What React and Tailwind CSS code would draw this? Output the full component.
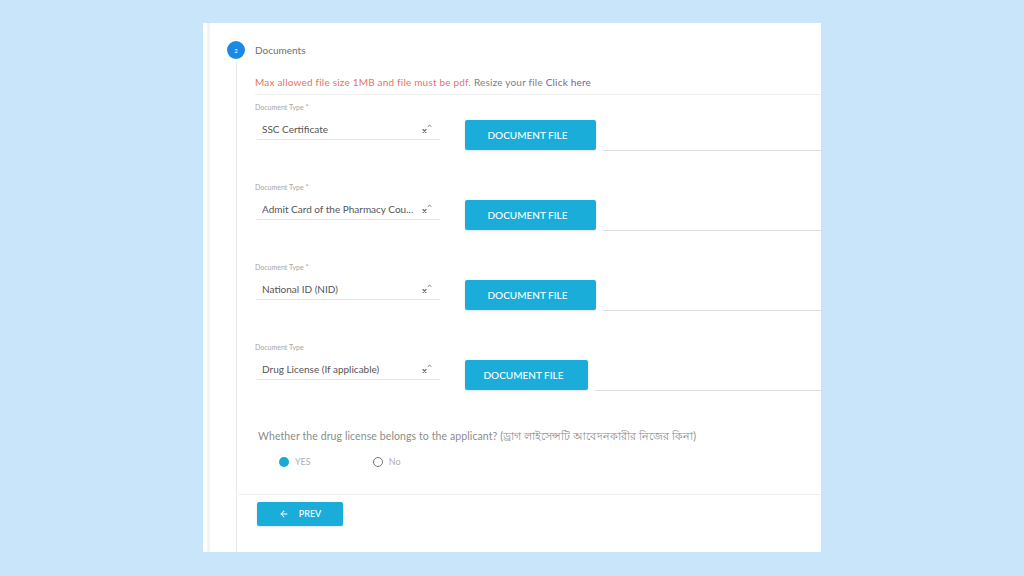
import { ArrowLeft } from 'lucide-react'

const rows = [
  { label: 'Document Type *', value: 'SSC Certificate', btn: 'w-[131px]' },
  { label: 'Document Type *', value: 'Admit Card of the Pharmacy Cou...', btn: 'w-[131px]' },
  { label: 'Document Type *', value: 'National ID (NID)', btn: 'w-[131px]' },
  { label: 'Document Type', value: 'Drug License (If applicable)', btn: 'w-[123px]' }
]

function ClearIcon() {
  return (
    <svg width="10" height="12" viewBox="0 0 10 12" className="shrink-0">
      <path d="M1 6.5 L4 9.5 M4 6.5 L1 9.5" stroke="#666" strokeWidth="1.1" strokeLinecap="round" />
      <path d="M6 3.5 L7.5 2 L9 3.5" stroke="#777" strokeWidth="1" fill="none" strokeLinecap="round" />
    </svg>
  )
}

function DocRow({ row }) {
  return (
    <div className="flex items-start h-[49px]">
      <div className="w-[185px]">
        <p className="h-[10px] text-[7px] leading-[10px] text-[#a5a5a5]">{row.label}</p>
        <div className="mt-[10px] ml-[2px] flex items-center justify-between border-b border-[#e4e4e4] pb-[3px] pl-[5px] pr-[8px]">
          <span className="text-[10px] leading-[14px] text-[#555] truncate">{row.value}</span>
          <ClearIcon />
        </div>
      </div>
      <button
        type="button"
        className={`mt-[18px] ml-[25px] h-[30px] ${row.btn} rounded-[2px] bg-[#1aadd9] pr-[6px] text-[10px] font-medium text-white shadow-sm`}
      >
        DOCUMENT FILE
      </button>
      <div className="ml-[7px] flex-1 h-[49px] border-b border-[#dddddd]" />
    </div>
  )
}

export default function App() {
  return (
    <div
      className="w-[1024px] h-[576px] bg-[#c8e5fa] pt-[23px] pl-[203px]"
      style={{ fontFamily: 'Lato, "Noto Sans", "Noto Sans CJK SC", sans-serif' }}
    >
      <div className="w-[618px] h-[529px] bg-white pl-[4px]">
        <div className="flex h-full border-l-[3px] border-[#f3f2f5]">
          {/* stepper */}
          <div className="w-[45px] flex flex-col pt-[18px]">
            <div className="ml-[17px] flex h-[18px] w-[18px] items-center justify-center rounded-full bg-[#1e88e5] text-[6px] text-white">
              2
            </div>
            <div className="ml-[26px] mt-[3px] w-px flex-1 bg-[#e8e8e8]" />
          </div>

          <div className="flex-1 pt-[18px]">
            <div className="flex h-[18px] items-center">
              <span className="text-[10px] text-[#707070]">Documents</span>
            </div>

            <div className="mt-[16px] border-b border-[#f0f0f0] pb-[5px] text-[10px] leading-[14px] tracking-[0.2px]">
              <span className="text-[#e5765f]">Max allowed file size 1MB and file must be pdf.</span>{' '}
              <span className="text-[#808080]">Resize your file</span>{' '}
              <span className="text-[#7a5f9e]">Click here</span>
            </div>

            <div className="mt-[7px] flex flex-col gap-[31px]">
              {rows.map((row, i) => (
                <DocRow key={i} row={row} />
              ))}
            </div>

            <p className="mt-[38px] ml-[3px] text-[10.5px] leading-[14px] tracking-[0.1px] text-[#8c8c8c]">
              Whether the drug license belongs to the applicant? (ড্রাগ লাইসেন্সটি আবেদনকারীর নিজের কিনা)
            </p>

            <div className="mt-[12px] ml-[24px] flex h-[14px] items-center text-[9px] text-[#b0b0b0]">
              <span className="h-[10px] w-[10px] rounded-full bg-[#1aa8d5]" />
              <span className="ml-[6px]">YES</span>
              <span className="ml-[62px] h-[10px] w-[10px] rounded-full border-[1.5px] border-[#777]" />
              <span className="ml-[6px]">No</span>
            </div>

            <div className="mt-[25px] -ml-[17px] border-t border-[#f0f0f0]" />

            <button
              type="button"
              className="mt-[7px] ml-[2px] flex h-[24px] w-[86px] items-center justify-center gap-[10px] rounded-[2px] bg-[#1aadd9] text-[9px] font-medium text-white shadow-sm"
            >
              <ArrowLeft size={10} strokeWidth={2.5} />
              PREV
            </button>
          </div>
        </div>
      </div>
    </div>
  )
}
